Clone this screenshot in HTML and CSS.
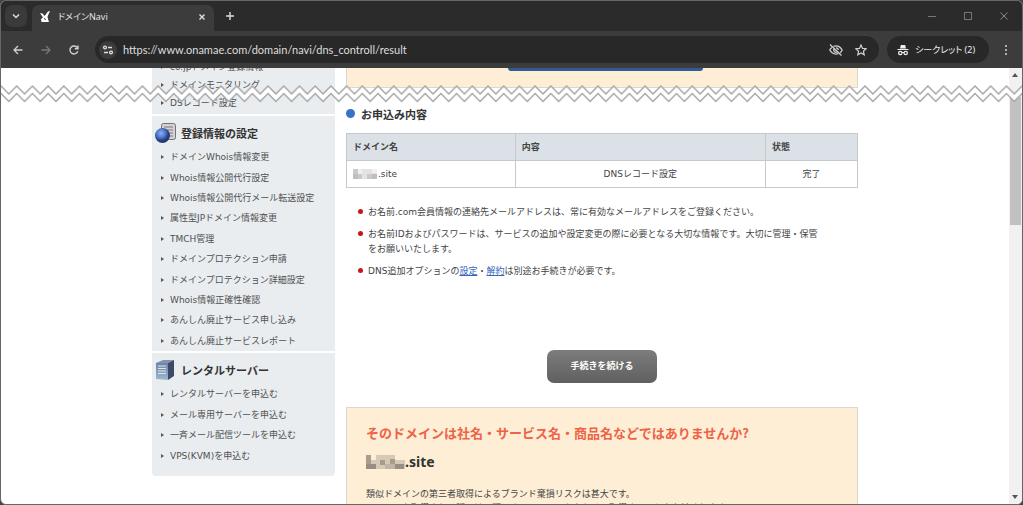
FILE: index.html
```html
<!DOCTYPE html>
<html lang="ja">
<head>
<meta charset="utf-8">
<title>ドメインNavi</title>
<link rel="stylesheet" href="styles.css">
</head>
<body>
<div class="window">
  <header class="chrome">
    <div class="tabstrip">
      <button class="tab-search" aria-label="タブを検索"><svg width="10" height="10" viewBox="0 0 10 10"><path d="M2 3.5 5 6.5 8 3.5" fill="none" stroke="#ddd" stroke-width="1.5"/></svg></button>
      <div class="tab">
        <svg class="favicon" width="12" height="12" viewBox="0 0 12 12"><path d="M1 2 3.5 2.500 5.500 5 9 .5 11 0 8.500 5.500 9 8 10 11H2.500L2 8 4 6.5Z" fill="#fff"/><path d="M5 7.5 7 8.5" stroke="#444"/></svg>
        <span class="tab-title">ドメインNavi</span>
        <button class="icon-button" aria-label="閉じる"><svg width="8" height="8" viewBox="0 0 8 8"><path d="M1.5 1.5 6.500 6.500M6.500 1.5 1.5 6.500" stroke="#e0e0e0" stroke-width="1.4"/></svg></button>
      </div>
      <button class="icon-button new-tab" aria-label="新しいタブ"><svg width="10" height="10" viewBox="0 0 10 10"><path d="M5 1V9M1 5H9" stroke="#ddd" stroke-width="1.400"/></svg></button>
      <div class="window-controls">
        <button class="icon-button" aria-label="最小化"><svg width="8" height="8" viewBox="0 0 8 8"><path d="M0 4.500H8" stroke="#777"/></svg></button>
        <button class="icon-button" aria-label="最大化"><svg width="8" height="8" viewBox="0 0 8 8"><rect x=".5" y=".5" width="7" height="7" fill="none" stroke="#777"/></svg></button>
        <button class="icon-button" aria-label="ウィンドウを閉じる"><svg width="8" height="8" viewBox="0 0 8 8"><path d="M.5.5 7.500 7.500M7.500.5.5 7.500" stroke="#888"/></svg></button>
      </div>
    </div>
    <div class="toolbar">
      <div class="nav-buttons">
        <button class="icon-button" aria-label="戻る"><svg width="10" height="10" viewBox="0 0 10 10"><path d="M9.500 5H1M5 1 1 5 5 9" fill="none" stroke="#d0d0d0" stroke-width="1.300"/></svg></button>
        <button class="icon-button" aria-label="進む"><svg width="10" height="10" viewBox="0 0 10 10"><path d="M.5 5H9M5 1 9 5 5 9" fill="none" stroke="#777" stroke-width="1.300"/></svg></button>
        <button class="icon-button" aria-label="再読み込み"><svg width="10" height="10" viewBox="0 0 10 10"><path d="M8.800 6.200A4 4 0 1 1 8.300 2.700M9 .5V3.700H5.800" fill="none" stroke="#d0d0d0" stroke-width="1.400"/></svg></button>
      </div>
      <div class="address">
        <button class="site-info" aria-label="サイト情報"><svg width="10" height="10" viewBox="0 0 10 10" fill="none" stroke="#ddd" stroke-width="1.300"><circle cx="2" cy="2.500" r="1.400"/><path d="M5 2.500H9M1 7.500H5"/><circle cx="8" cy="7.500" r="1.400"/></svg></button>
        <input class="url" type="text" aria-label="アドレス" value="https://www.onamae.com/domain/navi/dns_controll/result">
        <button class="icon-button" aria-label="サードパーティ Cookie をブロック"><svg width="14" height="12" viewBox="0 0 14 12" fill="none" stroke="#d0d0d0" stroke-width="1.300"><path d="M4.500 2.300Q10 .5 13.200 6 12.300 7.800 11 8.700M9.300 9.700Q3.800 11.200.8 6 1.600 4.500 2.800 3.500"/><path d="M7 3.800A2.200 2.200 0 0 1 9.300 6M8 8A2.200 2.200 0 0 1 5 5M1 .5 12.500 11.500"/></svg></button>
        <button class="icon-button" aria-label="ブックマーク"><svg width="12" height="12" viewBox="0 0 12 12"><path d="M6 1 7.500 4.400 11.200 4.700 8.400 7.200 9.200 10.800 6 8.900 2.800 10.800 3.600 7.200.8 4.700 4.500 4.400Z" fill="none" stroke="#d0d0d0" stroke-width="1.200"/></svg></button>
      </div>
      <button class="incognito"><svg width="12" height="12" viewBox="0 0 12 12"><path d="M3 4.500 3.800 1H8.200L9 4.500Z" fill="#eee"/><path d="M.5 5.500H11.500M4.800 8.500H7.200" stroke="#eee" stroke-width="1.200"/><circle cx="3.300" cy="9" r="1.700" fill="none" stroke="#eee" stroke-width="1.200"/><circle cx="8.700" cy="9" r="1.700" fill="none" stroke="#eee" stroke-width="1.200"/></svg><span>シークレット (2)</span></button>
      <button class="icon-button menu" aria-label="メニュー"><svg width="4" height="12" viewBox="0 0 4 12" fill="#ccc"><circle cx="2" cy="2" r="1.100"/><circle cx="2" cy="6" r="1.100"/><circle cx="2" cy="10" r="1.100"/></svg></button>
    </div>
  </header>

  <div class="viewport">
    <div class="page">
      <div class="columns upper">
        <div class="side side-upper">
          <ul class="links">
            <li><a href="#">co.jpドメイン登録情報</a></li>
            <li><a href="#">ドメインモニタリング</a></li>
          </ul>
        </div>
        <div class="main"><div class="offer-end"><div class="offer-button"></div></div></div>
      </div>

      <div class="columns">
        <nav class="side">
          <section class="group first">
            <ul class="links"><li><a href="#">DSレコード設定</a></li></ul>
          </section>
          <section class="group">
            <h3 class="group-title">
              <svg width="22" height="22" viewBox="0 0 22 22"><defs><radialGradient id="ball" cx=".4" cy=".35"><stop offset="0" stop-color="#8fb0f0"/><stop offset=".6" stop-color="#4c76cc"/><stop offset="1" stop-color="#243b79"/></radialGradient></defs><rect x="6.500" y="1.500" width="14" height="16" rx="2" fill="#d4d2d3" stroke="#777078"/><path d="M9 5H18M9 8H18M10 11H18M12 14H18" stroke="#81777c"/><circle cx="7.500" cy="13.500" r="7.500" fill="url(#ball)"/></svg>
              登録情報の設定
            </h3>
            <ul class="links ten">
              <li><a href="#">ドメインWhois情報変更</a></li>
              <li><a href="#">Whois情報公開代行設定</a></li>
              <li><a href="#">Whois情報公開代行メール転送設定</a></li>
              <li><a href="#">属性型JPドメイン情報変更</a></li>
              <li><a href="#">TMCH管理</a></li>
              <li><a href="#">ドメインプロテクション申請</a></li>
              <li><a href="#">ドメインプロテクション詳細設定</a></li>
              <li><a href="#">Whois情報正確性確認</a></li>
              <li><a href="#">あんしん廃止サービス申し込み</a></li>
              <li><a href="#">あんしん廃止サービスレポート</a></li>
            </ul>
          </section>
          <section class="group last">
            <h3 class="group-title">
              <svg width="22" height="22" viewBox="0 0 22 22"><defs><linearGradient id="front" x2="0" y2="1"><stop offset="0" stop-color="#6f82a8"/><stop offset="1" stop-color="#9cb9cd"/></linearGradient></defs><path d="M1 4 8 1H19L13 4Z" fill="#8792ad"/><path d="M13 4 19 1V17L13 21Z" fill="#3d4a68"/><path d="M1 4H13V21L1 20Z" fill="url(#front)"/><path d="M3 7H11M3 9.500H11M3 12H11M3 14.500H11" stroke="#dce5ee"/></svg>
              レンタルサーバー
            </h3>
            <ul class="links four">
              <li><a href="#">レンタルサーバーを申込む</a></li>
              <li><a href="#">メール専用サーバーを申込む</a></li>
              <li><a href="#">一斉メール配信ツールを申込む</a></li>
              <li><a href="#">VPS(KVM)を申込む</a></li>
            </ul>
          </section>
        </nav>

        <main class="main">
          <h2 class="section-title">お申込み内容</h2>
          <table class="result">
            <colgroup><col class="col-domain"><col class="col-item"><col class="col-state"></colgroup>
            <thead><tr><th>ドメイン名</th><th>内容</th><th>状態</th></tr></thead>
            <tbody><tr>
              <td class="domain"><svg class="mosaic" width="24" height="10" viewBox="0 0 24 10"><path d="M0 0H24V10H0Z" fill="#e4e2e4"/><path d="M0 0H5V5H0ZM5 5H9V10H5ZM14 5H19V10H14Z" fill="#ccc9cc"/><path d="M0 5H5V10H0ZM19 5H24V10H19Z" fill="#c0bec1"/><path d="M5 0H9V5H5ZM19 0H24V4H19Z" fill="#f1f0f1"/></svg>.site</td>
              <td>DNSレコード設定</td><td>完了</td>
            </tr></tbody>
          </table>
          <ul class="notes">
            <li>お名前.com会員情報の連絡先メールアドレスは、常に有効なメールアドレスをご登録ください。</li>
            <li>お名前IDおよびパスワードは、サービスの追加や設定変更の際に必要となる大切な情報です。大切に管理・保管<br>をお願いいたします。</li>
            <li>DNS追加オプションの<a href="#">設定</a>・<a href="#">解約</a>は別途お手続きが必要です。</li>
          </ul>
          <button class="continue">手続きを続ける</button>
          <section class="offer">
            <h2 class="offer-title">そのドメインは社名・サービス名・商品名などではありませんか?</h2>
            <p class="offer-domain"><svg class="mosaic" width="39" height="14" viewBox="0 0 39 14"><path d="M0 0H39V14H0Z" fill="#d6c9b5"/><path d="M0 0H5V9H0ZM14 5H19V10H14ZM24 4H29V9H24Z" fill="#a79c8e"/><path d="M0 9H10V14H0ZM29 9H38V14H29Z" fill="#988e83"/><path d="M5 0H10V5H5ZM29 0H39V5H29Z" fill="#fdeed5"/><path d="M19 9H29V14H19Z" fill="#c0b4a3"/></svg>.site</p>
            <p class="offer-text">類似ドメインの第三者取得によるブランド棄損リスクは甚大です。<br>ドメインを取得される際には、類似するドメインもあわせて取得することをお勧めします。</p>
          </section>
        </main>
      </div>
    </div>
    <div class="scrollbar">
      <svg width="12" height="14" viewBox="0 0 12 14"><path d="M3 9 6 5 9 9Z" fill="#555"/></svg>
      <div class="thumb"></div>
      <svg width="12" height="14" viewBox="0 0 12 14"><path d="M3 5 6 9 9 5Z" fill="#555"/></svg>
    </div>
    <svg class="tear" width="100%" height="20" aria-hidden="true">
      <defs><pattern id="zigzag" width="15.710" height="20" patternUnits="userSpaceOnUse">
        <path d="M-1 3 0 2 7.855 10 15.710 2 16.710 3V10.500L15.710 9.500 7.855 17.500 0 9.500-1 10.500Z" fill="#fff"/>
        <path d="M-1 3 0 2 7.855 10 15.710 2 16.710 3M-1 10.500 0 9.500 7.855 17.500 15.710 9.500 16.710 10.500" fill="none" stroke="#a6a6a6" stroke-width="1.500"/>
      </pattern></defs>
      <rect width="100%" height="20" fill="url(#zigzag)"/>
    </svg>
  </div>
</div>
</body>
</html>
```
FILE: styles.css
```css
* { box-sizing: border-box; }

body {
  margin: 0;
  background: #444;
  color: #444;
  font: 9px/15px "DejaVu Sans", "Noto Sans CJK JP", sans-serif;
}

h2, h3, p, ul { margin: 0; padding: 0; }
ul { list-style: none; }
svg { display: block; flex: none; }
button { font: inherit; border: 0; padding: 0; background: none; }

.window {
  display: flex;
  flex-direction: column;
  height: 100vh;
  border: 1px solid #666;
  border-radius: 6px;
  overflow: hidden;
  background: #fff;
}

/* Browser frame */
.chrome { flex: none; background: #3c3c3c; color: #e3e3e3; }

.icon-button {
  display: flex;
  align-items: center;
  justify-content: center;
  flex: none;
}

.tabstrip {
  display: flex;
  align-items: center;
  height: 30px;
  padding-left: 4px;
  background: #2b2b2b;
}

.tab-search {
  display: flex;
  align-items: center;
  justify-content: center;
  width: 22px;
  height: 22px;
  border-radius: 7px;
  background: #3a3a3a;
}

.tab {
  display: flex;
  align-items: center;
  align-self: flex-end;
  width: 182px;
  height: 26px;
  margin-left: 5px;
  padding: 0 8px 2px 7px;
  border-radius: 7px 7px 0 0;
  background: #3c3c3c;
}

.tab-title {
  flex: 1;
  margin-left: 7px;
  font: 9px/16px "Noto Sans", "Noto Sans CJK JP", sans-serif;
  font-feature-settings: "palt";
}

.new-tab { margin-left: 11px; }

.window-controls {
  display: flex;
  gap: 28px;
  margin-left: auto;
  padding-right: 14px;
}

.toolbar {
  display: flex;
  align-items: center;
  height: 37px;
  padding: 0 14px 0 12px;
}

.nav-buttons { display: flex; gap: 18px; width: 82px; }

.address {
  display: flex;
  flex: 1;
  align-items: center;
  gap: 12px;
  height: 27px;
  padding: 0 12px 0 4px;
  border-radius: 14px;
  background: #282828;
}

.site-info {
  display: flex;
  align-items: center;
  justify-content: center;
  width: 18px;
  height: 18px;
  border-radius: 9px;
  background: #3c3c3c;
}

.url {
  flex: 1;
  min-width: 0;
  margin-left: -6px;
  padding: 0;
  border: 0;
  outline: 0;
  background: none;
  color: #dedede;
  font: 11px/20px Lato, sans-serif;
}

.incognito {
  display: flex;
  align-items: center;
  gap: 6px;
  width: 102px;
  height: 27px;
  margin-left: 8px;
  padding-left: 10px;
  border-radius: 14px;
  background: #282828;
  color: #eee;
  font: 9px/16px "Noto Sans", "Noto Sans CJK JP", sans-serif;
  font-feature-settings: "palt";
  white-space: nowrap;
}

.menu { margin-left: 15px; }

/* Page area */
.viewport {
  position: relative;
  display: flex;
  flex: 1;
  min-height: 0;
}

.page { flex: 1; min-width: 0; overflow: hidden; }

.columns {
  display: flex;
  gap: 11px;
  max-width: 706px;
  margin: 0 auto;
}

.upper { height: 26px; overflow: hidden; }

.side { flex: none; width: 183px; }

.side-upper {
  display: flex;
  flex-direction: column;
  justify-content: flex-end;
  background: #e9edf0;
}

.main { flex: 1; min-width: 0; }

.links { display: grid; grid-auto-rows: 1fr; align-items: center; }
.links li { padding-left: 18px; line-height: 18px; }
.links li::before {
  content: "";
  float: left;
  margin: 7px 0 0 -9px;
  border: solid transparent;
  border-width: 2px 0 2px 3px;
  border-left-color: #555;
}
.links a { color: #505050; text-decoration: none; }
.ten { min-height: 204px; }
.four { min-height: 82px; }

.group { background: #e9edf0; border-bottom: 2px solid #fff; }
.first { padding-bottom: 2px; }
.last { padding-bottom: 10px; border: 0; border-radius: 0 0 4px 4px; }

.group-title {
  display: flex;
  align-items: center;
  gap: 4px;
  height: 31px;
  padding: 2px 0 0 3px;
  color: #333;
  font: bold 11px/20px "Noto Sans CJK JP", sans-serif;
}

.section-title {
  display: flex;
  align-items: center;
  gap: 6px;
  height: 39px;
  color: #333;
  font: bold 11px/20px "Noto Sans CJK JP", sans-serif;
}
.section-title::before {
  content: "";
  width: 9px;
  height: 9px;
  border-radius: 50%;
  background: #3771c8;
}

.result {
  width: 100%;
  border-collapse: collapse;
  table-layout: fixed;
}
.col-domain { width: 33%; }
.col-item { width: 49%; }
.col-state { width: 18%; }
.result th, .result td {
  height: 27px;
  padding: 0 6px;
  border: 1px solid #c6c8ca;
  text-align: center;
}
.result th { background: #dce1e7; text-align: left; }
.result .domain { text-align: left; }
.result .mosaic { display: inline-block; margin-right: 1px; vertical-align: -2px; }

.notes {
  display: grid;
  gap: 7px;
  padding: 17px 0 0 22px;
  white-space: nowrap;
}
.notes li::before {
  content: "";
  float: left;
  width: 5px;
  height: 5px;
  margin: 4px 0 0 -10px;
  border-radius: 50%;
  background: #c4171c;
}
.notes a { color: #3467bd; }

.continue {
  display: block;
  width: 110px;
  height: 33px;
  margin: 71px auto 24px;
  border-radius: 7px;
  background: linear-gradient(#7c7c7c, #606060);
  color: #fff;
  font-weight: bold;
}

.offer {
  padding: 15px 19px 20px;
  border: 1px solid #dcd8cf;
  background: #fdeed5;
}
.offer-title {
  color: #ee6245;
  font: bold 13px/20px "Noto Sans CJK JP", sans-serif;
}
.offer-domain {
  display: flex;
  align-items: center;
  padding: 9px 0 15px;
  color: #333;
  font: bold 14px/20px "Noto Sans", sans-serif;
}
.offer-text { line-height: 14px; white-space: nowrap; }

.offer-end {
  height: 20px;
  padding-left: 6px;
  border: solid #dcd8cf;
  border-width: 0 1px 1px;
  background: #fdeed5;
}
.offer-button {
  width: 195px;
  height: 3px;
  margin: 0 auto;
  border-radius: 0 0 6px 6px;
  background: #325a95;
}

.scrollbar {
  display: flex;
  flex-direction: column;
  flex: none;
  width: 13px;
  background: #f1f1f1;
}
.thumb {
  flex: 0 1 128px;
  margin: 15px 1px auto;
  background: #c1c1c1;
}

/* Torn edge between the two parts of the page */
.tear { position: absolute; left: 0; top: 16px; }
```
